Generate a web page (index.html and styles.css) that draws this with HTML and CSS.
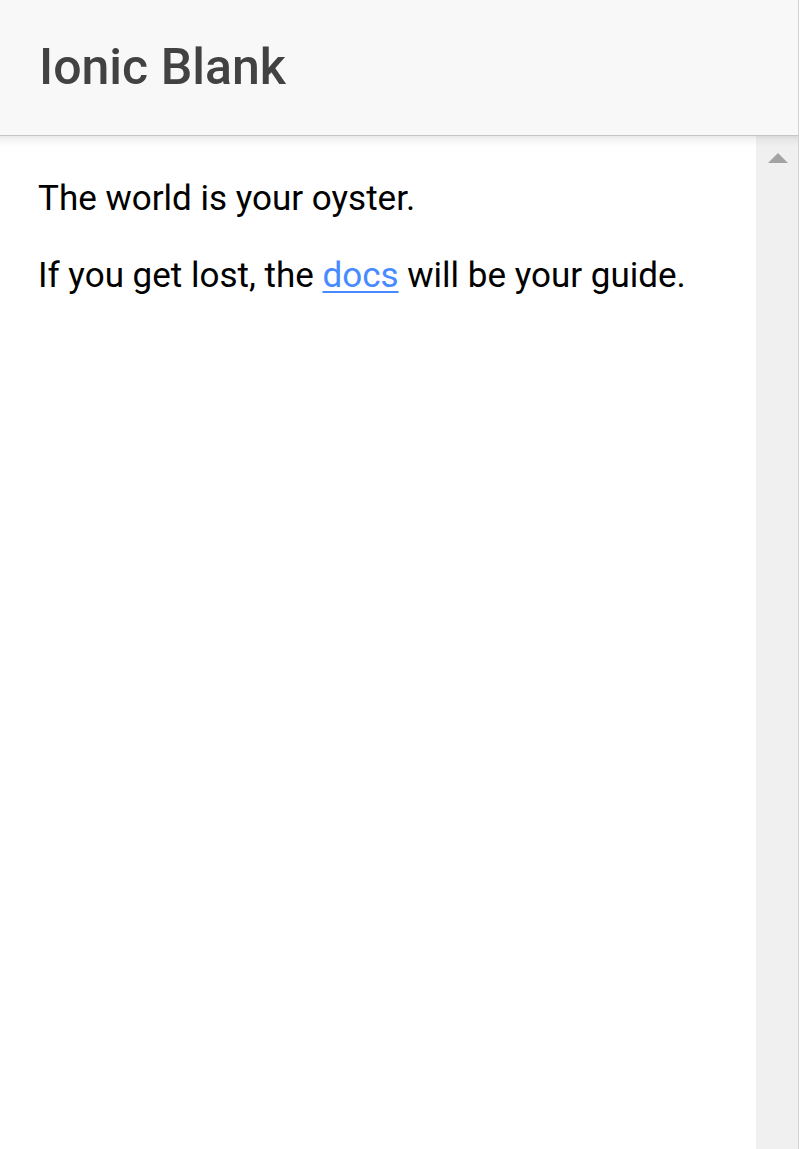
FILE: index.html
```html
<!DOCTYPE html>
<html lang="en">
<head>
<meta charset="utf-8">
<title>Ionic Blank</title>
<link rel="stylesheet" href="styles.css">
</head>
<body>
<div class="app">
  <header class="toolbar">
    <div class="title">Ionic Blank</div>
  </header>
  <div class="body">
    <main class="content">
      <p class="para">The world is your oyster.</p>
      <p class="para">If you get lost, the <a class="link" href="#">docs</a> will be your guide.</p>
    </main>
    <div class="scrollbar">
      <svg class="arrow" width="20" height="10" viewBox="0 0 20 10"><polygon points="10,0 20,10 0,10" fill="#a3a3a3"/></svg>
    </div>
  </div>
</div>
</body>
</html>
```

FILE: styles.css
```css
html, body {
  margin: 0;
  padding: 0;
  height: 100%;
  background: #fff;
}
.app {
  box-sizing: border-box;
  height: 1149px;
  width: 799px;
  border-right: 1px solid #d2d2d2;
  display: flex;
  flex-direction: column;
  font-family: Roboto, "Liberation Sans", sans-serif;
}
.toolbar {
  position: relative;
  z-index: 2;
  flex: none;
  background: #f8f8f8;
  display: flex;
  align-items: center;
  padding-left: 39px;
  padding-bottom: 2px;
  border-bottom: 1px solid #dcdcdc;
  box-sizing: border-box;
  height: 136px;
}
.toolbar::after {
  content: "";
  position: absolute;
  left: 0;
  right: 0;
  top: 100%;
  height: 12px;
  background: linear-gradient(to bottom, rgba(0,0,0,0.10), rgba(0,0,0,0.04) 40%, rgba(0,0,0,0));
  pointer-events: none;
}
.title {
  font-size: 50px;
  font-weight: 500;
  color: #424242;
  line-height: 56px;
}
.body {
  flex: 1;
  display: flex;
  min-height: 0;
}
.content {
  flex: 1;
  padding: 40px 38px;
}
.para {
  margin: 0 0 32px;
  font-size: 35px;
  line-height: 45px;
  color: #000;
}
.link {
  color: #488aff;
  text-decoration: underline;
  text-decoration-thickness: 2px;
  text-underline-offset: 4px;
}
.scrollbar {
  width: 42px;
  flex: none;
  background: #f0f0f0;
  display: flex;
  justify-content: center;
  align-items: flex-start;
  padding-top: 17px;
  box-sizing: border-box;
}
.arrow {
  display: block;
  margin-left: 1px;
}
```
